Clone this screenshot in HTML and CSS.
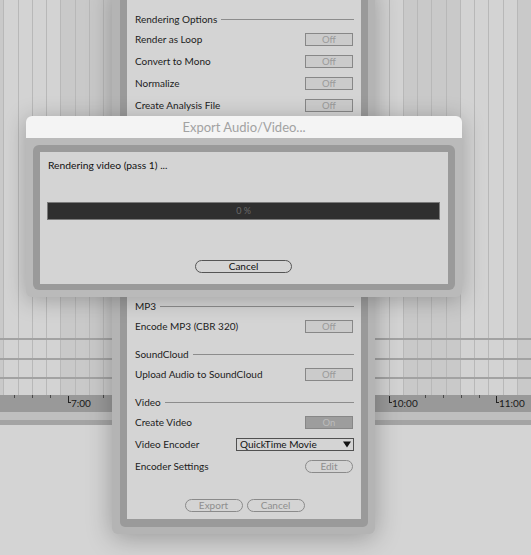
FILE: index.html
```html
<!DOCTYPE html>
<html>

<head>
  <meta charset="UTF-8">
  <title>Export Audio/Video</title>
  <link rel="stylesheet" href="styles.css">
</head>

<body>

  <div class="arrangement">
    <div class="tracks">
      <div class="lane lane-main"></div>
      <div class="lane lane-a"></div>
      <div class="lane lane-b"></div>
      <div class="lane lane-c"></div>
    </div>
    <div class="ruler">
      <span class="mark" style="left: 68px">7:00</span>
      <span class="mark" style="left: 389px">10:00</span>
      <span class="mark" style="left: 496px">11:00</span>
    </div>
    <div class="strip-light"></div>
    <div class="strip-dark"></div>
  </div>

  <!-- export settings window, partly hidden behind the progress dialog -->
  <div class="window">
    <div class="frame">
      <div class="panel">

        <div class="section">
          <div class="heading">Rendering Options</div>
          <div class="row"><span>Render as Loop</span><span class="toggle">Off</span></div>
          <div class="row"><span>Convert to Mono</span><span class="toggle">Off</span></div>
          <div class="row"><span>Normalize</span><span class="toggle">Off</span></div>
          <div class="row"><span>Create Analysis File</span><span class="toggle">Off</span></div>
        </div>

        <!-- rows covered by the progress dialog -->
        <div class="covered"></div>

        <div class="section">
          <div class="heading">MP3</div>
          <div class="row"><span>Encode MP3 (CBR 320)</span><span class="toggle">Off</span></div>
        </div>

        <div class="section">
          <div class="heading">SoundCloud</div>
          <div class="row"><span>Upload Audio to SoundCloud</span><span class="toggle">Off</span></div>
        </div>

        <div class="section">
          <div class="heading">Video</div>
          <div class="row"><span>Create Video</span><span class="toggle on">On</span></div>
          <div class="row">
            <span>Video Encoder</span>
            <span class="select">
              QuickTime Movie
              <svg width="8" height="7" viewBox="0 0 8 7"><path d="M0 0.5 H8 L4 6.5 Z" fill="#111"/></svg>
            </span>
          </div>
          <div class="row"><span>Encoder Settings</span><span class="pill edit">Edit</span></div>
        </div>

        <div class="footer">
          <span class="pill wide">Export</span>
          <span class="pill wide">Cancel</span>
        </div>

      </div>
    </div>
  </div>

  <!-- progress dialog -->
  <div class="progress-dialog">
    <div class="titlebar">Export Audio/Video...</div>
    <div class="progress-body">
      <div class="progress-frame">
        <div class="progress-panel">
          <div class="status">Rendering video (pass 1) ...</div>
          <div class="bar">0 %</div>
          <div class="actions">
            <span class="pill cancel">Cancel</span>
          </div>
        </div>
      </div>
    </div>
  </div>

</body>

</html>
```

FILE: styles.css
```css
* {
  box-sizing: border-box;
}

body {
  margin: 0;
  width: 531px;
  height: 555px;
  overflow: hidden;
  position: relative;
  background: #d4d4d4;
  font-family: Lato, "Liberation Sans", sans-serif;
  font-size: 10px;
  color: #1c1c1c;
}

/* arrangement behind the windows */
.tracks {
  height: 395px;
  background-color: #d3d3d3;
  background-image:
    repeating-linear-gradient(to right, transparent 0 3.3px, #b8b8b8 3.3px 4.3px, transparent 4.3px 14.27px),
    repeating-linear-gradient(to right, #c9c9c9 0 4.3px, #d3d3d3 4.3px 61.38px, #c9c9c9 61.38px 114.16px);
}

.lane {
  border-bottom: 2px solid #a2a2a2;
}

.lane-main {
  height: 340px;
}

.lane-a {
  height: 20px;
}

.lane-b {
  height: 19px;
}

.lane-c {
  height: 16px;
  border-bottom: none;
}

.ruler {
  position: relative;
  height: 17px;
  background-color: #999;
  background-image: repeating-linear-gradient(to right, transparent 0 14.1px, #4a4a4a 14.1px 15.1px, transparent 15.1px 17.88px);
  background-size: 100% 3px;
  background-repeat: no-repeat;
}

.mark {
  position: absolute;
  top: 0;
  height: 17px;
  padding: 3px 0 0 3px;
  background: #999;
  font-size: 10px;
  line-height: 10px;
  color: #1a1a1a;
}

.mark::before {
  content: "";
  position: absolute;
  left: 0;
  top: 1px;
  width: 2px;
  height: 6px;
  border-left: 1px solid #222;
  border-bottom: 1px solid #222;
}

.strip-light {
  height: 8px;
  background: #bfbfbf;
}

.strip-dark {
  height: 5px;
  background: #a4a4a4;
}

/* export settings window */
.window {
  position: absolute;
  left: 112px;
  top: -15px;
  width: 263px;
  padding: 8px 7px 7px 8px;
  background: #b4b4b4;
  border-radius: 6px;
  box-shadow: 0 4px 26px rgba(0, 0, 0, 0.28);
}

.frame {
  padding: 7px 7px 8px 7px;
  background: #9a9a9a;
  border-radius: 5px;
}

.panel {
  padding: 10px 7px 7px 8px;
  background: #d4d4d4;
}

.section + .section {
  margin-top: 8px;
}

.covered {
  height: 181px;
}

.heading {
  display: flex;
  align-items: center;
  height: 18px;
}

.heading::after {
  content: "";
  flex: 1;
  height: 1px;
  margin-left: 4px;
  background: #8c8c8c;
}

.row {
  display: flex;
  align-items: center;
  justify-content: space-between;
  height: 22px;
}

.toggle {
  width: 48px;
  height: 13px;
  margin-right: 1px;
  border: 1px solid #878787;
  background: #cbcbcb;
  color: #9a9a9a;
  font-size: 9.5px;
  line-height: 11px;
  text-align: center;
}

.toggle.on {
  background: #9d9d9d;
  color: #bcbcbc;
}

.select {
  display: flex;
  align-items: center;
  justify-content: space-between;
  width: 118px;
  height: 13px;
  padding: 0 2px 0 3px;
  border: 1px solid #505050;
  color: #111;
  font-size: 10px;
}

.pill {
  display: inline-block;
  height: 13px;
  border: 1px solid #8a8a8a;
  border-radius: 7px;
  color: #8e8e8e;
  font-size: 10px;
  line-height: 11px;
  text-align: center;
}

.edit {
  width: 48px;
  margin-right: 1px;
}

.footer {
  display: flex;
  justify-content: center;
  gap: 4px;
  margin-top: 22px;
}

.wide {
  width: 58px;
}

/* progress dialog */
.progress-dialog {
  position: absolute;
  left: 26px;
  top: 116px;
  width: 436px;
  height: 181px;
  display: flex;
  flex-direction: column;
  background: #bababa;
  border-radius: 6px;
  overflow: hidden;
  box-shadow: 0 3px 22px rgba(0, 0, 0, 0.25);
}

.titlebar {
  height: 22px;
  background: #f4f4f4;
  color: #a2a2a2;
  font-size: 13px;
  line-height: 22px;
  text-align: center;
}

.progress-body {
  flex: 1;
  display: flex;
  padding: 7px;
}

.progress-frame {
  flex: 1;
  display: flex;
  padding: 7px 7px 6px 7px;
  background: #9a9a9a;
  border-radius: 6px;
}

.progress-panel {
  flex: 1;
  display: flex;
  flex-direction: column;
  padding: 7px 8px 0 7px;
  background: #d4d4d4;
}

.status {
  padding-left: 1px;
  font-size: 10.3px;
  line-height: 12px;
  color: #111;
}

.bar {
  height: 18px;
  margin-top: 31px;
  border: 1px solid #7a7a7a;
  background: #2f2f2f;
  color: #6a6a6a;
  font-size: 9px;
  line-height: 16px;
  text-align: center;
}

.actions {
  display: flex;
  justify-content: center;
  margin-top: 40px;
}

.cancel {
  width: 97px;
  border-color: #555;
  color: #111;
}
```
